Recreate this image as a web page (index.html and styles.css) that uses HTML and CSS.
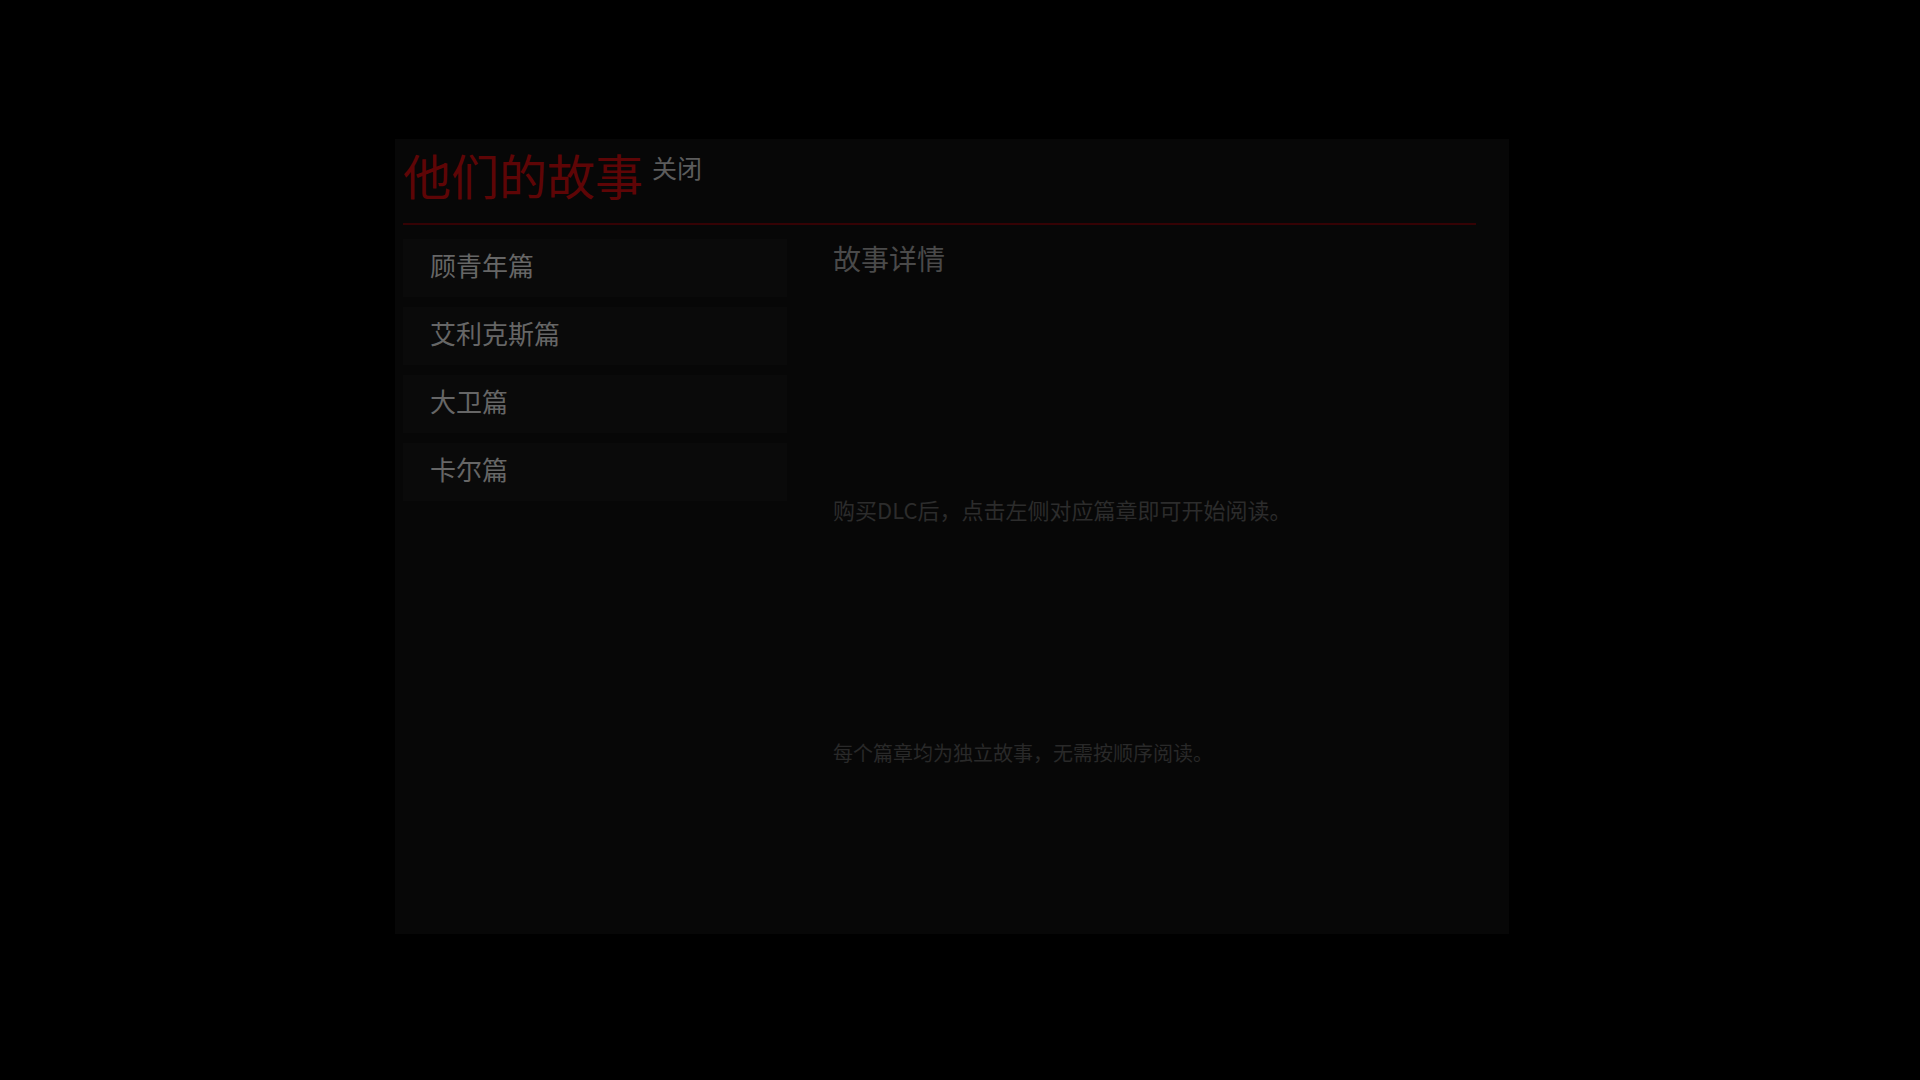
FILE: index.html
```html
<!DOCTYPE html>
<html lang="zh-CN">
<head>
<meta charset="utf-8">
<title>他们的故事</title>
<link rel="stylesheet" href="styles.css">
</head>
<body>
<div class="screen">
  <div class="panel">
    <div class="header">
      <div class="title">他们的故事</div>
      <div class="close">关闭</div>
    </div>
    <div class="body">
      <ul class="list">
        <li class="item">顾青年篇</li>
        <li class="item">艾利克斯篇</li>
        <li class="item">大卫篇</li>
        <li class="item">卡尔篇</li>
      </ul>
      <div class="detail">
        <div class="detail-title">故事详情</div>
        <p class="note note-1">购买DLC后，点击左侧对应篇章即可开始阅读。</p>
        <p class="note note-2">每个篇章均为独立故事，无需按顺序阅读。</p>
      </div>
    </div>
  </div>
</div>
</body>
</html>
```

FILE: styles.css
```css
html, body {
  margin: 0;
  padding: 0;
  background: #000;
  width: 1920px;
  height: 1080px;
  overflow: hidden;
  font-family: "Noto Sans CJK SC", "Noto Sans", sans-serif;
}

.screen {
  width: 1920px;
  height: 1080px;
  padding: 139px 0 0 395px;
  box-sizing: border-box;
}

.panel {
  width: 1114px;
  height: 795px;
  background: #070707;
  padding: 0 33px 0 8px;
  box-sizing: border-box;
  display: flex;
  flex-direction: column;
}

.header {
  display: flex;
  align-items: flex-start;
  gap: 9px;
  padding-bottom: 14px;
  border-bottom: 2px solid #350204;
}

.title {
  font-size: 48px;
  line-height: 70px;
  color: #5e0506;
}

.close {
  font-size: 25px;
  line-height: 36px;
  margin-top: 10px;
  color: #5c5c5c;
}

.body {
  display: flex;
  padding-top: 14px;
}

.list {
  list-style: none;
  margin: 0;
  padding: 0;
  width: 384px;
  display: flex;
  flex-direction: column;
  gap: 10px;
}

.item {
  height: 58px;
  background: #0a0a0a;
  color: #666;
  font-size: 26px;
  display: flex;
  align-items: center;
  padding-left: 27px;
  padding-bottom: 7px;
  box-sizing: border-box;
}

.detail {
  margin-left: 46px;
  margin-top: -1px;
}

.detail-title {
  font-size: 28px;
  line-height: 40px;
  color: #4a4a4a;
}

.note {
  margin: 0;
}

.note-1 {
  margin-top: 215px;
  font-size: 22px;
  line-height: 32px;
  color: #2c2c2c;
}

.note-2 {
  margin-top: 213px;
  font-size: 20px;
  line-height: 29px;
  color: #292929;
}
```
